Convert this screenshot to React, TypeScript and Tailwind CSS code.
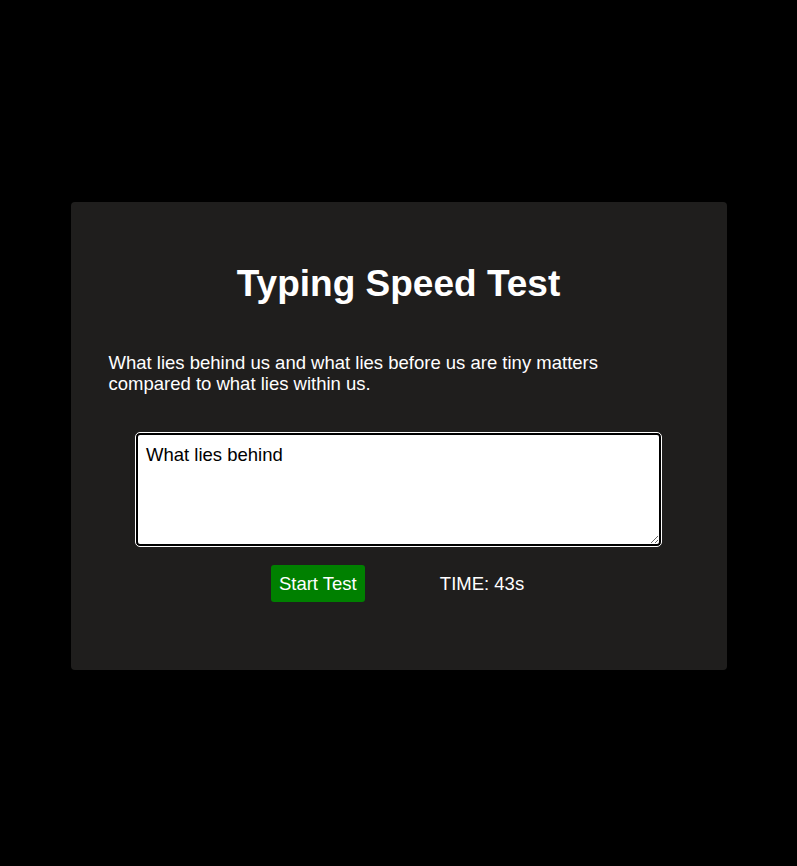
import React from "react";

export default function App() {
  return (
    <div
      className="min-h-[866px] w-full bg-black flex justify-center pt-[202px]"
      style={{ fontFamily: '"Liberation Sans", Arial, sans-serif' }}
    >
      <div className="w-[656px] h-[468px] bg-[#1f1e1d] rounded-[4px] flex flex-col items-center pt-[61px] px-[38px]">
        <h1 className="text-[37px] leading-[41px] font-bold text-white text-center">
          Typing Speed Test
        </h1>
        <p className="mt-[48px] self-start w-[560px] text-[18.5px] leading-[21px] text-white">
          What lies behind us and what lies before us are tiny matters compared to what lies within us.
        </p>
        <textarea
          className="mt-[39px] block w-[525px] h-[113px] bg-white text-black text-[18.5px] leading-[21px] border-2 border-black rounded-[4px] outline outline-1 outline-white pl-[8px] pr-[8px] pt-[9px] pb-[8px]"
          defaultValue="What lies behind"
          style={{ fontFamily: '"Liberation Sans", Arial, sans-serif' }}
        />
        <div className="mt-[19px] flex items-center gap-[75px] ml-[-2px]">
          <button className="bg-[#008000] text-white text-[18.5px] leading-[21px] rounded-[3px] w-[94px] h-[37px] flex items-center justify-center">
            Start Test
          </button>
          <span className="text-white text-[18.5px] leading-[21px]">TIME: 43s</span>
        </div>
      </div>
    </div>
  );
}
